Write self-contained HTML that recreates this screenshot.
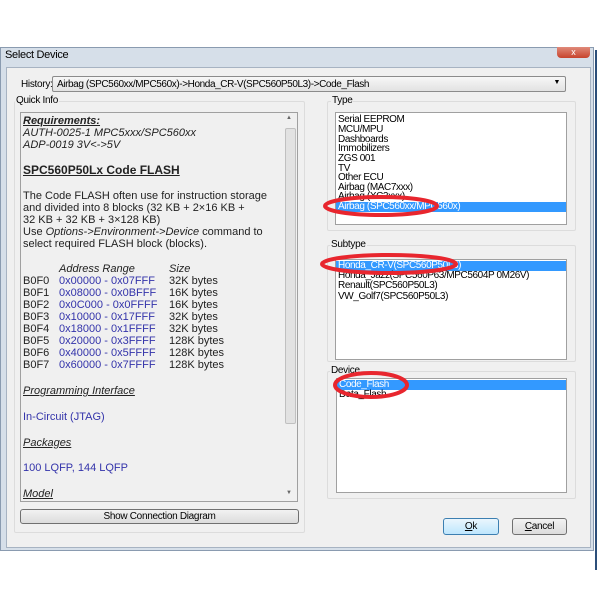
<!DOCTYPE html>
<html><head><style>
*{margin:0;padding:0;box-sizing:border-box}
body{width:600px;height:600px;background:#fff;position:relative;overflow:hidden;font-family:"Liberation Sans",sans-serif;font-size:11px;color:#000}
.a{position:absolute}
.lst{background:#fff;border:1px solid #a0a0a0}
.it{position:absolute;left:2px;height:10px;line-height:10px;font-size:10px;letter-spacing:-0.4px;white-space:nowrap}
.sel{background:#3399ff;color:#fff;left:0;right:0;padding-left:2px}
.q{position:absolute;left:23px;font-size:11px;line-height:12px;white-space:nowrap;color:#222}
.b{color:#3333aa}
.i{font-style:italic}
.btn{border:1px solid #707070;border-radius:3px;background:linear-gradient(#f2f2f2,#dcdcdc);text-align:center;font-size:10px;letter-spacing:-0.3px}
.grp{border:1px solid #dcdcdc;border-radius:2px}
.lb{background:#f0f0f0;padding:0 1px;font-size:10px;letter-spacing:-0.3px;z-index:2}
</style></head><body>
<div class="a" style="left:0;top:47px;width:594px;height:504px;background:#d6dfe9;border:1px solid #8a9bb0"></div>
<div class="a" style="left:594px;top:47px;width:6px;height:510px;background:#fff"></div>
<div class="a" style="left:595px;top:50px;width:2px;height:520px;background:#2c4f7a"></div>
<div class="a" style="left:5px;top:49px;font-size:11px;letter-spacing:-0.3px">Select Device</div>
<div class="a" style="left:557px;top:47px;width:33px;height:11px;background:linear-gradient(#e08a7a,#c7432c);border-radius:0 0 4px 4px;color:#fff;text-align:center;font-size:9px;line-height:10px">x</div>
<div class="a" style="left:6px;top:67px;width:585px;height:481px;background:#f0f0f0;border:1px solid #a7b3c2"></div>
<div class="a" style="left:21px;top:79px;font-size:10px;letter-spacing:-0.3px">History:</div>
<div class="a" style="left:52px;top:76px;width:514px;height:16px;border:1px solid #8b8b8b;border-radius:2px;background:linear-gradient(#f7f7f7,#e2e2e2);font-size:10px;letter-spacing:-0.4px;padding:2px 0 0 4px">Airbag (SPC560xx/MPC560x)-&gt;Honda_CR-V(SPC560P50L3)-&gt;Code_Flash<span style="position:absolute;right:5px;top:2px;font-size:7px">▼</span></div>
<div class="a grp" style="left:14px;top:101px;width:291px;height:432px"></div>
<div class="a lb" style="left:15px;top:95px">Quick Info</div>
<div class="a" style="left:20px;top:112px;width:278px;height:390px;background:#f0f0f0;border:1px solid #a0a0a0"></div>
<div class="a" style="left:283px;top:113px;width:14px;height:388px;background:#f0f0f0"></div>
<div class="a" style="left:285px;top:128px;width:11px;height:296px;background:#e2e2e2;border:1px solid #c0c0c0;border-radius:2px"></div>
<div class="a" style="left:286px;top:115px;font-size:6px;color:#666">▲</div>
<div class="a" style="left:286px;top:490px;font-size:6px;color:#666">▼</div>
<div class="q i" style="top:115px;font-weight:bold;text-decoration:underline">Requirements:</div>
<div class="q i" style="top:127px">AUTH-0025-1 MPC5xxx/SPC560xx</div>
<div class="q i" style="top:139px">ADP-0019 3V&lt;-&gt;5V</div>
<div class="q" style="top:164px;font-weight:bold;font-size:12px;text-decoration:underline">SPC560P50Lx Code FLASH</div>
<div class="q" style="top:190px">The Code FLASH often use for instruction storage</div>
<div class="q" style="top:202px">and divided into 8 blocks (32 KB + 2×16 KB +</div>
<div class="q" style="top:214px">32 KB + 32 KB + 3×128 KB)</div>
<div class="q" style="top:226px">Use <i>Options-&gt;Environment-&gt;Device</i> command to</div>
<div class="q" style="top:238px">select required FLASH block (blocks).</div>
<div class="q i" style="top:263px;left:59px">Address Range</div><div class="q i" style="top:263px;left:169px">Size</div>
<div class="a" style="left:23px;top:275px;font-size:11px;line-height:12px;color:#222">
B0F0<br>B0F1<br>B0F2<br>B0F3<br>B0F4<br>B0F5<br>B0F6<br>B0F7</div>
<div class="a b" style="left:59px;top:275px;font-size:11px;line-height:12px">0x00000 - 0x07FFF<br>0x08000 - 0x0BFFF<br>0x0C000 - 0x0FFFF<br>0x10000 - 0x17FFF<br>0x18000 - 0x1FFFF<br>0x20000 - 0x3FFFF<br>0x40000 - 0x5FFFF<br>0x60000 - 0x7FFFF</div>
<div class="a" style="left:169px;top:275px;font-size:11px;line-height:12px;color:#222">32K bytes<br>16K bytes<br>16K bytes<br>32K bytes<br>32K bytes<br>128K bytes<br>128K bytes<br>128K bytes</div>
<div class="q i" style="top:385px;text-decoration:underline">Programming Interface</div>
<div class="q b" style="top:411px">In-Circuit (JTAG)</div>
<div class="q i" style="top:437px;text-decoration:underline">Packages</div>
<div class="q b" style="top:462px">100 LQFP, 144 LQFP</div>
<div class="q i" style="top:488px;text-decoration:underline">Model</div>
<div class="a btn" style="left:20px;top:509px;width:279px;height:15px;line-height:13px">Show Connection Diagram</div>

<div class="a grp" style="left:327px;top:101px;width:249px;height:130px"></div>
<div class="a lb" style="left:331px;top:95px">Type</div>
<div class="a lst" style="left:335px;top:112px;width:232px;height:113px">
<div class="it" style="top:2px">Serial EEPROM</div><div class="it" style="top:12px">MCU/MPU</div><div class="it" style="top:22px">Dashboards</div><div class="it" style="top:31px">Immobilizers</div><div class="it" style="top:41px">ZGS 001</div><div class="it" style="top:51px">TV</div><div class="it" style="top:60px">Other ECU</div><div class="it" style="top:70px">Airbag (MAC7xxx)</div><div class="it" style="top:79px">Airbag (XC2xxx)</div><div class="it sel" style="top:89px">Airbag (SPC560xx/MPC560x)</div></div>
<div class="a grp" style="left:327px;top:245px;width:249px;height:117px"></div>
<div class="a lb" style="left:330px;top:239px">Subtype</div>
<div class="a lst" style="left:335px;top:259px;width:232px;height:101px">
<div class="it sel" style="top:1px">Honda_CR-V(SPC560P50L3)</div><div class="it" style="top:11px">Honda_Jazz(SPC560P63/MPC5604P 0M26V)</div><div class="it" style="top:21px">Renault(SPC560P50L3)</div><div class="it" style="top:32px">VW_Golf7(SPC560P50L3)</div></div>
<div class="a grp" style="left:327px;top:371px;width:249px;height:128px"></div>
<div class="a lb" style="left:330px;top:365px">Device</div>
<div class="a lst" style="left:336px;top:378px;width:231px;height:115px">
<div class="it sel" style="top:1px">Code_Flash</div><div class="it" style="top:11px">Data_Flash</div></div>
<div class="a btn" style="left:443px;top:518px;width:56px;height:17px;line-height:15px;border-color:#3c7fb1;background:linear-gradient(#eaf6fd,#bee6fd)"><u>O</u>k</div>
<div class="a btn" style="left:512px;top:518px;width:55px;height:17px;line-height:15px"><u>C</u>ancel</div>

<svg class="a" style="left:0;top:0;z-index:5" width="600" height="600">
<g fill="none" stroke="#e8262e" stroke-width="4">
<ellipse cx="381" cy="206" rx="56" ry="9"/>
<ellipse cx="389" cy="264" rx="67" ry="9"/>
<ellipse cx="371" cy="385" rx="36" ry="12"/>
</g></svg>
</body></html>
